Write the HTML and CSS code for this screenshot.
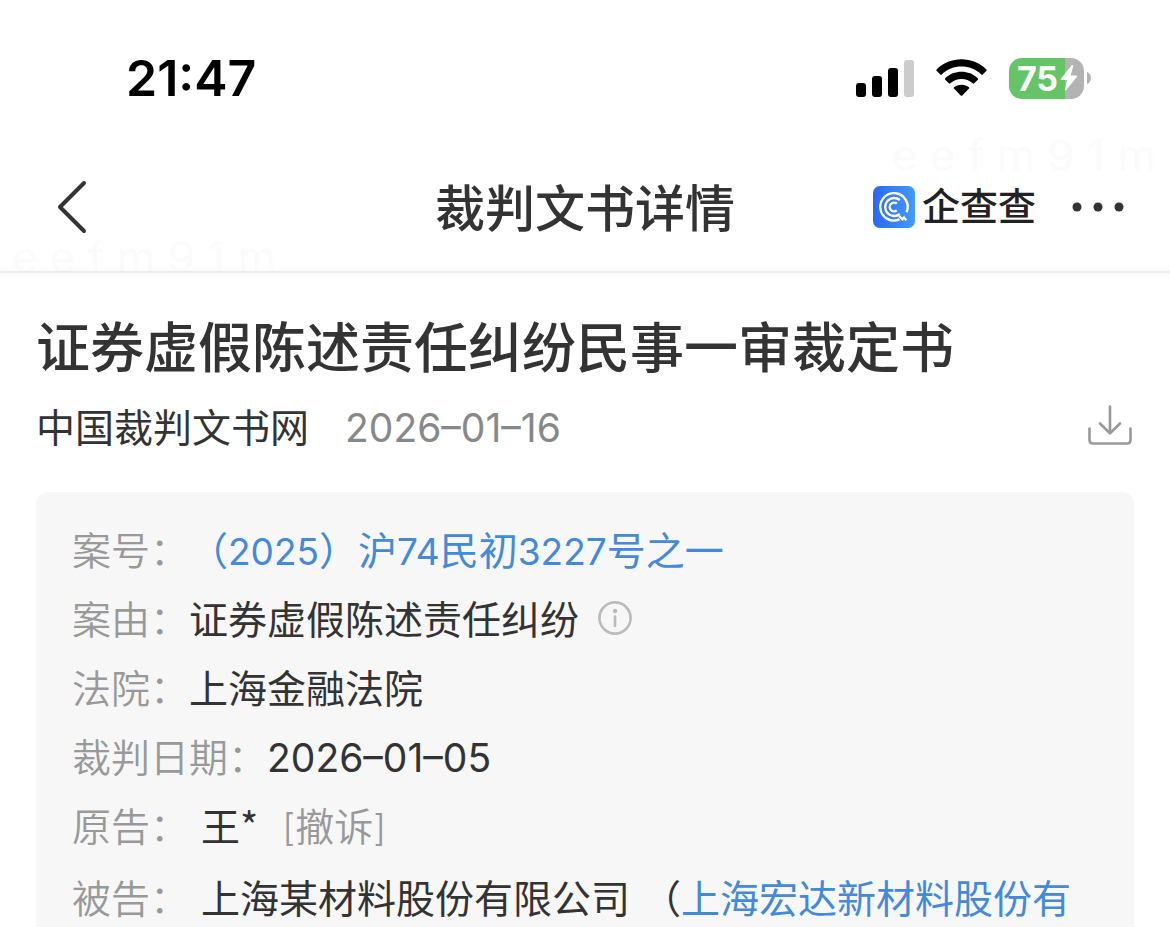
FILE: index.html
```html
<!DOCTYPE html>
<html lang="zh-CN">
<head>
<meta charset="utf-8">
<meta name="viewport" content="width=device-width, initial-scale=1">
<title>裁判文书详情</title>
<link rel="stylesheet" href="styles.css">
</head>
<body>
<div class="screen">
  <header class="top">
    <span class="watermark watermark-right" aria-hidden="true">e e f m 9 1 m</span>
    <span class="watermark watermark-left" aria-hidden="true">e e f m 9 1 m</span>
    <div class="status">
      <time class="clock">21:47</time>
      <div class="indicators">
        <svg class="signal" width="58" height="37" viewBox="0 0 58 37" aria-hidden="true">
          <rect x="0" y="23" width="10" height="14" rx="3"/>
          <rect x="16" y="16" width="10" height="21" rx="3"/>
          <rect x="32" y="8" width="10" height="29" rx="3"/>
          <rect x="48" y="0" width="10" height="37" rx="3" fill="#ccc"/>
        </svg>
        <svg class="wifi" width="51" height="38" viewBox="0 0 51 38" aria-hidden="true">
          <path d="M0.6 10.4C14 -3 37 -3 50.4 10.4C50.9 10.9 50.9 11.3 50.4 11.8L46.8 15.4C46.3 15.9 45.8 15.9 45.3 15.4C34.4 5 16.6 5 5.7 15.4C5.2 15.9 4.7 15.9 4.2 15.4L0.6 11.8C0.1 11.3 0.1 10.9 0.6 10.4Z"/>
          <path d="M9.2 19.3C18 10.7 33 10.7 41.8 19.3C42.3 19.8 42.3 20.2 41.8 20.7L38.2 24.3C37.7 24.8 37.2 24.8 36.7 24.3C30.5 18.6 20.5 18.6 14.3 24.3C13.8 24.8 13.3 24.8 12.8 24.3L9.2 20.7C8.7 20.2 8.7 19.8 9.2 19.3Z"/>
          <path d="M18 28.2C22 24.8 29 24.8 33 28.2C33.5 28.7 33.5 29.1 33 29.6L26.3 36.4C25.8 36.9 25.2 36.9 24.7 36.4L18 29.6C17.5 29.1 17.5 28.7 18 28.2Z"/>
        </svg>
        <div class="battery">
          <div class="battery-body">
            <span>75</span>
            <svg width="18" height="26" viewBox="0 0 18 26" aria-hidden="true"><path d="M11.5 0.5L1 13.6C0.5 14.3 0.8 15 1.6 15H7.3L4.8 24.4C4.5 25.5 5.6 26 6.3 25.1L16.9 11.8C17.4 11.1 17.1 10.4 16.3 10.4H10.6L13.1 1.4C13.4 0.2 12.3 -0.4 11.5 0.5Z" fill="#fff"/></svg>
          </div>
          <svg width="4" height="12" viewBox="0 0 4 12" aria-hidden="true"><path d="M0 0C5.3 2 5.3 10 0 12Z" fill="#b3b3b3"/></svg>
        </div>
      </div>
    </div>
    <nav class="nav">
      <button class="icon-button back" aria-label="返回">
        <svg width="30" height="54" viewBox="0 0 30 54" aria-hidden="true"><path d="M27 3L3 27L27 51" fill="none" stroke="#333" stroke-width="4" stroke-linecap="round" stroke-linejoin="round"/></svg>
      </button>
      <h2 class="nav-title">裁判文书详情</h2>
      <div class="nav-right">
        <div class="brand">
          <svg width="42" height="42" viewBox="0 0 42 42" aria-hidden="true">
            <defs><linearGradient id="brand-blue" x1="0" y1="0" x2="1" y2="0"><stop offset="0" stop-color="#2d67f3"/><stop offset="1" stop-color="#429bf8"/></linearGradient></defs>
            <rect width="42" height="42" rx="7" fill="url(#brand-blue)"/>
            <g fill="none" stroke="#fff" stroke-width="2.4">
              <path d="M26.5 33.4A13.7 13.7 0 1 1 33.6 26.200"/>
              <path d="M26 30L29.500 33.300L31 31.500L33.300 34.200"/>
              <path d="M26.8 14A9 9 0 1 0 26.8 28"/>
              <path d="M23.8 17.5A4.400 4.400 0 1 0 23.8 24.500"/>
            </g>
          </svg>
          <span class="brand-name">企查查</span>
        </div>
        <button class="icon-button" aria-label="更多">
          <svg width="52" height="10" viewBox="0 0 52 10" fill="#333" aria-hidden="true"><circle cx="5" cy="5" r="4.5"/><circle cx="26" cy="5" r="4.5"/><circle cx="47" cy="5" r="4.5"/></svg>
        </button>
      </div>
    </nav>
  </header>
  <main class="doc">
    <h1 class="doc-title">证券虚假陈述责任纠纷民事一审裁定书</h1>
    <div class="meta">
      <p class="source">中国裁判文书网<time class="meta-date date">2026–01–16</time></p>
      <button class="icon-button" aria-label="下载">
        <svg width="44" height="40" viewBox="0 0 44 40" fill="none" stroke="#999" stroke-width="2.6" stroke-linecap="round" stroke-linejoin="round" aria-hidden="true"><path d="M22 1.5V28M12 18.5L22 28.3L32 18.5M1.5 23.5V35C1.5 37.2 2.8 38.5 5 38.5H39C41.2 38.5 42.5 37.2 42.5 35V23.5"/></svg>
      </button>
    </div>
    <dl class="card">
      <div class="row"><dt>案号：</dt><dd><a href="#">（<span class="num">2025</span>）沪<span class="num">74</span>民初<span class="num">3227</span>号之一</a></dd></div>
      <div class="row"><dt>案由：</dt><dd class="with-icon">证券虚假陈述责任纠纷
        <button class="icon-button" aria-label="案由说明"><svg width="34" height="34" viewBox="0 0 34 34" aria-hidden="true"><circle cx="17" cy="17" r="15.6" fill="none" stroke="#bbb" stroke-width="2.6"/><circle cx="17" cy="10" r="2.2" fill="#bbb"/><path d="M17 15.5V25" stroke="#bbb" stroke-width="2.6" stroke-linecap="round"/></svg></button>
      </dd></div>
      <div class="row"><dt>法院：</dt><dd>上海金融法院</dd></div>
      <div class="row"><dt>裁判日期：</dt><dd><time class="date">2026–01–05</time></dd></div>
      <div class="row"><dt>原告：</dt><dd class="party">王*<span class="tag"><span class="num">[</span>撤诉<span class="num">]</span></span></dd></div>
      <div class="row row-last"><dt>被告：</dt><dd class="party">上海某材料股份有限公司<span class="alias">（<a href="#">上海宏达新材料股份有</a></span></dd></div>
    </dl>
  </main>
</div>
</body>
</html>
```
FILE: styles.css
```css
* { box-sizing: border-box; }

body {
  margin: 0;
  background: #fff;
  color: #333;
  font-family: "Noto Sans CJK SC", sans-serif;
  font-size: 39px;
}

svg { display: block; flex: none; }
a { color: #4389dc; text-decoration: none; }
h1, h2, p, dl, dd { margin: 0; }

.screen {
  height: 100vh;
  display: flex;
  flex-direction: column;
  overflow: hidden;
}

.num, .date { font-family: Inter, "Noto Sans CJK SC", sans-serif; line-height: 1; }
.num { font-size: 37px; }
.date { font-size: 39px; }

.icon-button {
  border: 0;
  padding: 0;
  background: none;
  cursor: pointer;
}

/* Header */
.top {
  position: relative;
  flex: none;
  border-bottom: 2px solid #ebebeb;
}

.watermark {
  position: absolute;
  z-index: -1;
  color: #fbfbfb;
  font: 44px/48px Inter, sans-serif;
  white-space: nowrap;
}
.watermark-right { right: 14px; top: 131px; }
.watermark-left { left: 12px; bottom: -10px; }

.status {
  height: 156px;
  padding: 0 79px 0 126px;
  display: flex;
  align-items: center;
  justify-content: space-between;
  color: #000;
}
.clock { font: 600 50px/60px Inter, sans-serif; }
.indicators { display: flex; align-items: center; gap: 22px; }

.battery { display: flex; align-items: center; gap: 3px; }
.battery-body {
  width: 75px;
  height: 41px;
  border-radius: 13px;
  display: flex;
  align-items: center;
  justify-content: center;
  gap: 2px;
  padding-left: 2px;
  background: linear-gradient(90deg, #65c466 56px, #b3b3b3 56px);
  color: #fff;
  font: 700 34px/41px Inter, sans-serif;
}

.nav {
  height: 115px;
  padding: 0 46px 13px;
  display: grid;
  grid-template-columns: 1fr auto 1fr;
  align-items: center;
}
.back { justify-self: start; margin-left: 11px; }
.nav-title { padding-bottom: 4px; font-size: 50px; line-height: 72px; font-weight: 500; }
.nav-right {
  justify-self: end;
  display: flex;
  align-items: center;
  gap: 36px;
}
.brand {
  display: flex;
  align-items: center;
  gap: 7px;
  color: #222;
  font-size: 38px;
  line-height: 42px;
  font-weight: 500;
}
.brand-name { padding-bottom: 6px; }

/* Document */
.doc {
  flex: 1;
  padding: 34px 36px 0;
  display: flex;
  flex-direction: column;
}
.doc-title {
  font-size: 54px;
  line-height: 76px;
  font-weight: 500;
}
.meta {
  margin: 14px 0 39px;
  padding-right: 2px;
  display: flex;
  align-items: center;
  justify-content: space-between;
  line-height: 56px;
}
.meta-date { margin-left: 36px; color: #888; }

.card {
  flex: 1;
  padding: 22px 36px 0;
  border-radius: 12px 12px 0 0;
  background: #f7f7f7;
  line-height: 69px;
  white-space: nowrap;
}
.row { display: flex; }
.row-last { margin-top: 3px; }
.row dt { color: #999; font-weight: 350; }
.with-icon { display: flex; align-items: center; gap: 19px; }
.party { padding-left: 12px; }
.tag { margin-left: 24px; color: #999; font-weight: 350; }
.alias { margin-left: 12px; }
```
